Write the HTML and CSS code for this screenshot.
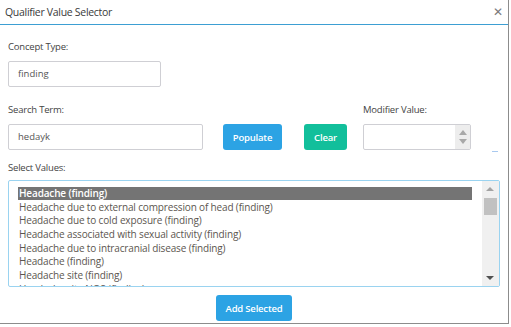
FILE: index.html
```html
<!DOCTYPE html>
<html>
<head>
<meta charset="utf-8">
<link rel="stylesheet" href="styles.css">
</head>
<body>
<div class="dialog">
  <div class="header">
    <span class="title">Qualifier Value Selector</span>
    <span class="close">&#x2715;</span>
  </div>
  <div class="body">
    <div class="label l1">Concept Type:</div>
    <div class="input concept">finding</div>

    <div class="row">
      <div class="field search">
        <div class="label">Search Term:</div>
        <div class="input">hedayk</div>
      </div>
      <button class="btn blue populate">Populate</button>
      <button class="btn teal clear">Clear</button>
      <div class="field modifier">
        <div class="label">Modifier Value:</div>
        <div class="number">
          <div class="num-val"></div>
          <div class="spin">
            <span class="up"></span>
            <span class="down"></span>
          </div>
        </div>
      </div>
      <span class="dash"></span>
    </div>

    <div class="label l3">Select Values:</div>
    <div class="list">
      <div class="options">
        <div class="opt sel">Headache (finding)</div>
        <div class="opt">Headache due to external compression of head (finding)</div>
        <div class="opt">Headache due to cold exposure (finding)</div>
        <div class="opt">Headache associated with sexual activity (finding)</div>
        <div class="opt">Headache due to intracranial disease (finding)</div>
        <div class="opt">Headache (finding)</div>
        <div class="opt">Headache site (finding)</div>
        <div class="opt">Headache site NOS (finding)</div>
      </div>
      <div class="scrollbar">
        <span class="sup"></span>
        <span class="thumb"></span>
        <span class="sdown"></span>
      </div>
    </div>
    <div class="footer">
      <button class="btn blue add">Add Selected</button>
    </div>
  </div>
</div>
</body>
</html>
```
FILE: styles.css
```css
html, body {
  margin: 0;
  padding: 0;
  background: #fff;
}
body {
  font-family: "Open Sans", "DejaVu Sans", sans-serif;
  font-size: 10px;
  color: #444;
}
.dialog {
  width: 509px;
  height: 324px;
  box-sizing: border-box;
  border-right: 1px solid #8c8c8c;
  border-bottom: 1px solid #8c8c8c;
  overflow: hidden;
}
.header {
  height: 25px;
  box-sizing: border-box;
  border-bottom: 1px solid #3d9fd3;
  display: flex;
  align-items: center;
  justify-content: space-between;
  padding: 0 5px 1px 5px;
}
.title {
  font-size: 10.5px;
  color: #3a3a3a;
  letter-spacing: -0.3px;
}
.close {
  font-size: 12px;
  font-weight: bold;
  color: #7a7a7a;
  font-family: "DejaVu Sans", sans-serif;
}
.body {
  padding: 0 8px;
}
.label {
  height: 12px;
  line-height: 12px;
  font-size: 9.5px;
  color: #444;
  letter-spacing: -0.2px;
}
.l1 {
  margin-top: 16px;
}
.input {
  box-sizing: border-box;
  height: 26px;
  border: 1px solid #cfcfd4;
  border-radius: 2px;
  padding-left: 9px;
  line-height: 24px;
  font-size: 9.5px;
  color: #555;
  margin-top: 8px;
}
.concept {
  width: 153px;
}
.row {
  display: flex;
  align-items: flex-end;
  margin-top: 17px;
  position: relative;
}
.search {
  width: 195px;
}
.btn {
  border: none;
  border-radius: 3px;
  color: #fff;
  font-family: "Open Sans", "DejaVu Sans", sans-serif;
  font-size: 9.5px;
  font-weight: 600;
  height: 26px;
  padding: 0;
  letter-spacing: -0.2px;
}
.blue {
  background: #2ca3e4;
}
.teal {
  background: #12bf9b;
}
.populate {
  width: 59px;
  margin-left: 20px;
}
.clear {
  width: 43px;
  margin-left: 22px;
}
.modifier {
  width: 108px;
  margin-left: 16px;
}
.number {
  box-sizing: border-box;
  height: 26px;
  margin-top: 8px;
  border: 1px solid #cfcfd4;
  border-radius: 2px;
  display: flex;
}
.num-val {
  flex: 1;
}
.spin {
  width: 15px;
  background: #ededed;
  display: flex;
  flex-direction: column;
  align-items: center;
  justify-content: space-around;
  padding: 3px 0;
}
.up, .down {
  width: 0;
  height: 0;
  border-left: 4px solid transparent;
  border-right: 4px solid transparent;
}
.up {
  border-bottom: 5px solid #a8a8a8;
}
.down {
  border-top: 5px solid #a8a8a8;
}
.dash {
  position: absolute;
  left: 484px;
  bottom: -2px;
  width: 6px;
  height: 1px;
  background: #a9c9ef;
}
.l3 {
  margin-top: 12px;
}
.list {
  box-sizing: border-box;
  margin-top: 6px;
  height: 107px;
  border: 1px solid #9ad3f0;
  border-radius: 2px;
  display: flex;
  overflow: hidden;
}
.options {
  flex: 1;
  padding: 6px 10px 0 9px;
  overflow: hidden;
}
.opt {
  height: 13.7px;
  line-height: 13.7px;
  font-size: 10px;
  color: #5c5650;
  padding-left: 1px;
  white-space: nowrap;
  letter-spacing: -0.15px;
}
.opt.sel {
  background: #747474;
  color: #fff;
  font-weight: 600;
  height: 13px;
  line-height: 13px;
  margin-bottom: 0.7px;
}
.scrollbar {
  width: 17px;
  background: #f0f0f0;
  position: relative;
}
.sup, .sdown {
  position: absolute;
  left: 4px;
  width: 0;
  height: 0;
  border-left: 4px solid transparent;
  border-right: 4px solid transparent;
}
.sup {
  top: 6px;
  border-bottom: 4px solid #a3a3a3;
}
.sdown {
  bottom: 6px;
  border-top: 4px solid #505050;
}
.thumb {
  position: absolute;
  left: 2px;
  top: 17px;
  width: 13px;
  height: 17px;
  background: #c1c1c1;
}
.footer {
  display: flex;
  justify-content: center;
  margin-top: 8px;
}
.add {
  width: 76px;
}
```
